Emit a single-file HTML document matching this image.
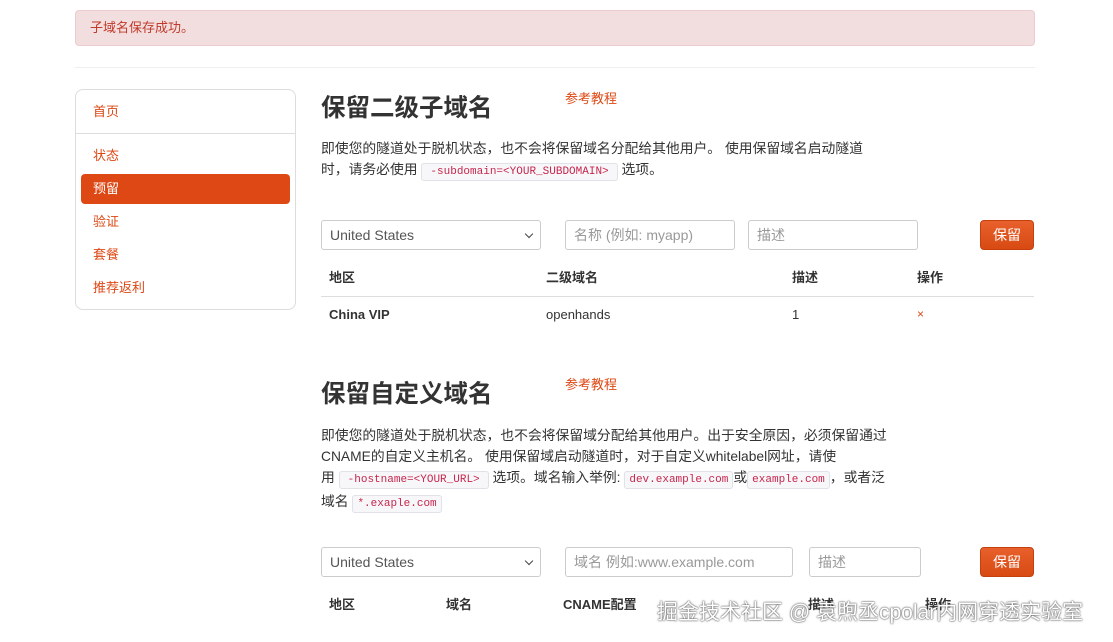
<!DOCTYPE html>
<html><head><meta charset="utf-8"><style>
*{box-sizing:border-box;margin:0;padding:0}
body{width:1113px;height:642px;overflow:hidden;background:#fff;font-family:"Liberation Sans","Noto Sans CJK SC",sans-serif;font-size:13px;color:#333;position:relative}
.a{position:absolute;white-space:nowrap}
.alert{left:75px;top:10px;width:960px;height:36px;background:#f2dede;border:1px solid #ebccd1;border-radius:4px;color:#c0392b;padding:0 14px;line-height:34px;font-size:13px}
.hr{left:75px;top:67px;width:960px;height:1px;background:#eee}
.side{left:75px;top:89px;width:221px;height:221px;border:1px solid #ddd;border-radius:8px}
.nav{color:#dd4814;font-size:13px;left:93px;line-height:18px}
.act{left:81px;top:174px;width:209px;height:30px;background:#dd4814;border-radius:4px;color:#fff;padding:0 12px;line-height:30px}
h1{position:absolute;font-size:24.5px;font-weight:bold;color:#333;white-space:nowrap;line-height:30px}
.ref{color:#dd4814;font-size:13px;line-height:18px}
.p{line-height:21px;font-size:13.8px}
code{font-family:"Liberation Mono",monospace;font-size:11px;color:#c7254e;background:#f7f7f9;border:1px solid #e1e1e8;border-radius:3px;padding:2px 8px}
.in{position:absolute;height:30px;border:1px solid #ccc;border-radius:3px;padding:0 8px;line-height:28px;color:#999;font-size:14px;white-space:nowrap}
.sel{color:#555}
.sel:after{content:"";position:absolute;right:8px;top:10px;width:5px;height:5px;border-right:1.5px solid #444;border-bottom:1.5px solid #444;transform:rotate(45deg)}
.btn{position:absolute;width:54px;height:30px;background:linear-gradient(#e8602c,#d84a12);border:1px solid #c5400f;border-radius:4px;color:#fff;text-align:center;line-height:28px;font-size:14px}
.th{font-weight:bold;font-size:13px;line-height:18px}
.td{font-size:13px;line-height:18px}
</style></head><body>
<div class="a alert">子域名保存成功。</div>
<div class="a hr"></div>
<div class="a side"></div>
<div class="a nav" style="top:103px">首页</div>
<div class="a" style="left:76px;top:133px;width:219px;height:1px;background:#ddd"></div>
<div class="a nav" style="top:147px">状态</div>
<div class="a act">预留</div>
<div class="a nav" style="top:213px">验证</div>
<div class="a nav" style="top:246px">套餐</div>
<div class="a nav" style="top:279px">推荐返利</div>

<h1 style="left:321px;top:94px">保留二级子域名</h1>
<div class="a ref" style="left:565px;top:90px">参考教程</div>
<div class="a p" style="left:321px;top:138px">即使您的隧道处于脱机状态，也不会将保留域名分配给其他用户。 使用保留域名启动隧道<br>时，请务必使用 <code>-subdomain=&lt;YOUR_SUBDOMAIN&gt;</code> 选项。</div>
<div class="in sel" style="left:321px;top:220px;width:220px">United States</div>
<div class="in" style="left:565px;top:220px;width:170px">名称 (例如: myapp)</div>
<div class="in" style="left:748px;top:220px;width:170px">描述</div>
<div class="btn" style="left:980px;top:220px">保留</div>
<div class="a th" style="left:329px;top:269px">地区</div>
<div class="a th" style="left:546px;top:269px">二级域名</div>
<div class="a th" style="left:792px;top:269px">描述</div>
<div class="a th" style="left:917px;top:269px">操作</div>
<div class="a" style="left:321px;top:296px;width:713px;height:1px;background:#ddd"></div>
<div class="a th" style="left:329px;top:306px">China VIP</div>
<div class="a td" style="left:546px;top:306px">openhands</div>
<div class="a td" style="left:792px;top:306px">1</div>
<div class="a" style="left:917px;top:307px;color:#dd4814;font-size:12px">×</div>

<h1 style="left:321px;top:380px">保留自定义域名</h1>
<div class="a ref" style="left:565px;top:376px">参考教程</div>
<div class="a p" style="left:321px;top:425px">即使您的隧道处于脱机状态，也不会将保留域分配给其他用户。出于安全原因，必须保留通过<br>CNAME的自定义主机名。 使用保留域启动隧道时，对于自定义whitelabel网址，请使<br>用 <code>-hostname=&lt;YOUR_URL&gt;</code> 选项。域名输入举例: <code style="padding:2px 4px">dev.example.com</code>或<code style="padding:2px 4px">example.com</code>，或者泛<br>域名 <code style="padding:2px 4px">*.exaple.com</code></div>
<div class="in sel" style="left:321px;top:547px;width:220px">United States</div>
<div class="in" style="left:565px;top:547px;width:228px">域名 例如:www.example.com</div>
<div class="in" style="left:809px;top:547px;width:112px">描述</div>
<div class="btn" style="left:980px;top:547px">保留</div>
<div class="a th" style="left:329px;top:596px">地区</div>
<div class="a th" style="left:446px;top:596px">域名</div>
<div class="a th" style="left:563px;top:596px">CNAME配置</div>
<div class="a th" style="left:808px;top:596px">描述</div>
<div class="a th" style="left:925px;top:596px">操作</div>
<div class="a" style="left:657px;top:596px;font-size:21px;color:#fff;text-shadow:0 0 2px #555,0 0 1px #333">掘金技术社区 @ 袁煦丞cpolar内网穿透实验室</div>
</body></html>
